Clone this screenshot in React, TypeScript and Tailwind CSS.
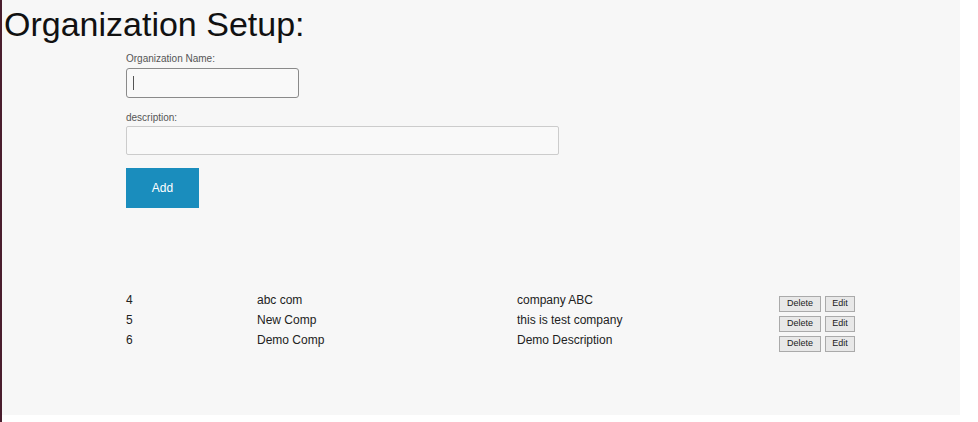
const rows = [
  { id: 4, name: 'abc com', description: 'company ABC' },
  { id: 5, name: 'New Comp', description: 'this is test company' },
  { id: 6, name: 'Demo Comp', description: 'Demo Description' },
]

export default function App() {
  return (
    <div className="flex h-[422px] w-[978px] bg-white font-['Liberation_Sans',Arial,sans-serif]">
      <div className="w-[2px] bg-[#4a1e2e]" />
      <div className="flex h-[415px] w-[958px] flex-col bg-[#f7f7f7]">
        <h1 className="ml-[2px] mt-[4px] text-[34px] leading-[40px] text-[#111]">Organization Setup:</h1>

        <div className="ml-[124px] mt-[9px] flex flex-col">
          <label className="text-[10px] leading-[12px] text-[#555]">Organization Name:</label>
          <div className="mt-[3px] flex h-[30px] w-[173px] items-center rounded-[3px] border border-[#8a8a8a] bg-[#f9f9f9] px-[6px]">
            <span className="h-[14px] w-px bg-[#555]" />
          </div>

          <label className="mt-[14px] text-[10px] leading-[12px] text-[#555]">description:</label>
          <div className="mt-[2px] h-[29px] w-[433px] rounded-[2px] border border-[#ccc] bg-[#f9f9f9]" />

          <button className="mt-[13px] h-[40px] w-[73px] bg-[#1a8dbd] text-[12px] text-white">Add</button>
        </div>

        <div className="ml-[124px] mt-[82px] flex flex-col">
          {rows.map((r) => (
            <div key={r.id} className="flex h-[20px] items-center text-[12px] text-[#222]">
              <span className="w-[131px]">{r.id}</span>
              <span className="w-[260px]">{r.name}</span>
              <span className="w-[262px]">{r.description}</span>
              <div className="mt-[7px] flex gap-[4px]">
                <button className="h-[16px] w-[42px] border border-[#aaa] bg-[#e8e8e8] text-[9px] leading-none text-[#222]">Delete</button>
                <button className="h-[16px] w-[30px] border border-[#aaa] bg-[#e8e8e8] text-[9px] leading-none text-[#222]">Edit</button>
              </div>
            </div>
          ))}
        </div>
      </div>
    </div>
  )
}
